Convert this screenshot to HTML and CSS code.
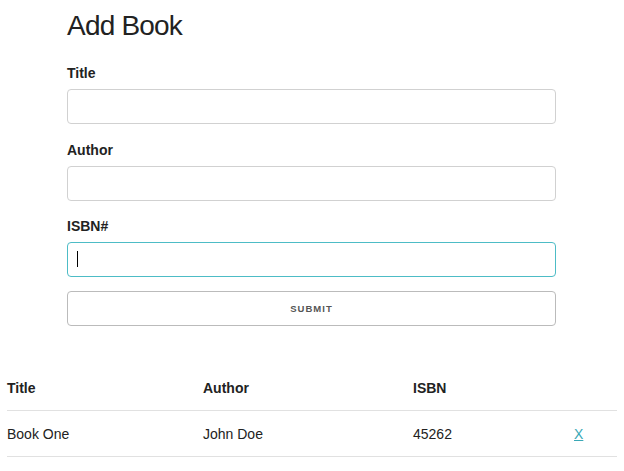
FILE: index.html
```html
<!DOCTYPE html>
<html>
<head>
<meta charset="utf-8">
<link rel="stylesheet" href="styles.css">
</head>
<body>
<div class="container">
  <h1 class="title">Add Book</h1>
  <form class="book-form">
    <div class="field">
      <label class="label">Title</label>
      <input class="input" type="text">
    </div>
    <div class="field">
      <label class="label">Author</label>
      <input class="input" type="text">
    </div>
    <div class="field">
      <label class="label">ISBN#</label>
      <div class="input-wrap">
        <input class="input input-focus" type="text">
        <span class="caret"></span>
      </div>
    </div>
    <button class="button" type="button">Submit</button>
  </form>
</div>
<table class="book-table">
  <thead>
    <tr>
      <th class="c1">Title</th>
      <th class="c2">Author</th>
      <th class="c3">ISBN</th>
      <th class="c4"></th>
    </tr>
  </thead>
  <tbody>
    <tr>
      <td>Book One</td>
      <td>John Doe</td>
      <td>45262</td>
      <td><a href="#" class="delete">X</a></td>
    </tr>
  </tbody>
</table>
</body>
</html>
```
FILE: styles.css
```css
html, body {
  margin: 0;
  padding: 0;
  background: #fff;
}
body {
  font-family: "Liberation Sans", Arial, sans-serif;
  color: #222;
  font-size: 14px;
  line-height: 16px;
}
.container {
  width: 489px;
  margin-left: 67px;
  padding-top: 9px;
}
.title {
  margin: 0;
  font-size: 28px;
  line-height: 1.2;
  font-weight: normal;
  letter-spacing: -0.8px;
  color: #222;
}
.book-form {
  margin-top: 22.4px;
  display: flex;
  flex-direction: column;
}
.field {
  display: flex;
  flex-direction: column;
  margin-bottom: 17.7px;
}
.field:nth-child(3) {
  margin-bottom: 14px;
}
.label {
  display: block;
  font-weight: bold;
  font-size: 14px;
  line-height: 16px;
  margin-bottom: 8px;
  color: #222;
}
.input-wrap {
  position: relative;
}
.input {
  display: block;
  box-sizing: border-box;
  width: 489px;
  height: 35px;
  margin: 0;
  padding: 6px 10px;
  border: 1px solid #d1d1d1;
  border-radius: 4px;
  background: #fff;
  font-family: inherit;
  font-size: 14px;
  outline: none;
}
.input-focus {
  border-color: #4dbcc6;
}
.caret {
  position: absolute;
  left: 10px;
  top: 9px;
  width: 1px;
  height: 16px;
  background: #000;
}
.button {
  display: block;
  box-sizing: border-box;
  width: 489px;
  height: 35px;
  margin: 0;
  padding: 0;
  border: 1px solid #bbb;
  border-radius: 4px;
  background: #fff;
  color: #555;
  font-family: "Liberation Sans", Arial, sans-serif;
  font-size: 9.5px;
  font-weight: bold;
  letter-spacing: 1px;
  text-transform: uppercase;
  text-align: center;
  cursor: pointer;
}
.book-table {
  margin-top: 39px;
  margin-left: 7px;
  width: 610px;
  border-collapse: collapse;
  border-spacing: 0;
}
.book-table th,
.book-table td {
  text-align: left;
  padding: 14.5px 0 14.3px 0;
  border-bottom: 1px solid #e1e1e1;
  font-size: 14px;
  line-height: 16px;
  vertical-align: top;
}
.book-table th {
  font-weight: bold;
}
.c1 { width: 196px; }
.c2 { width: 210px; }
.c3 { width: 161px; }
.delete {
  color: #3aa8b6;
  text-decoration: underline;
  font-size: 14px;
}
```
